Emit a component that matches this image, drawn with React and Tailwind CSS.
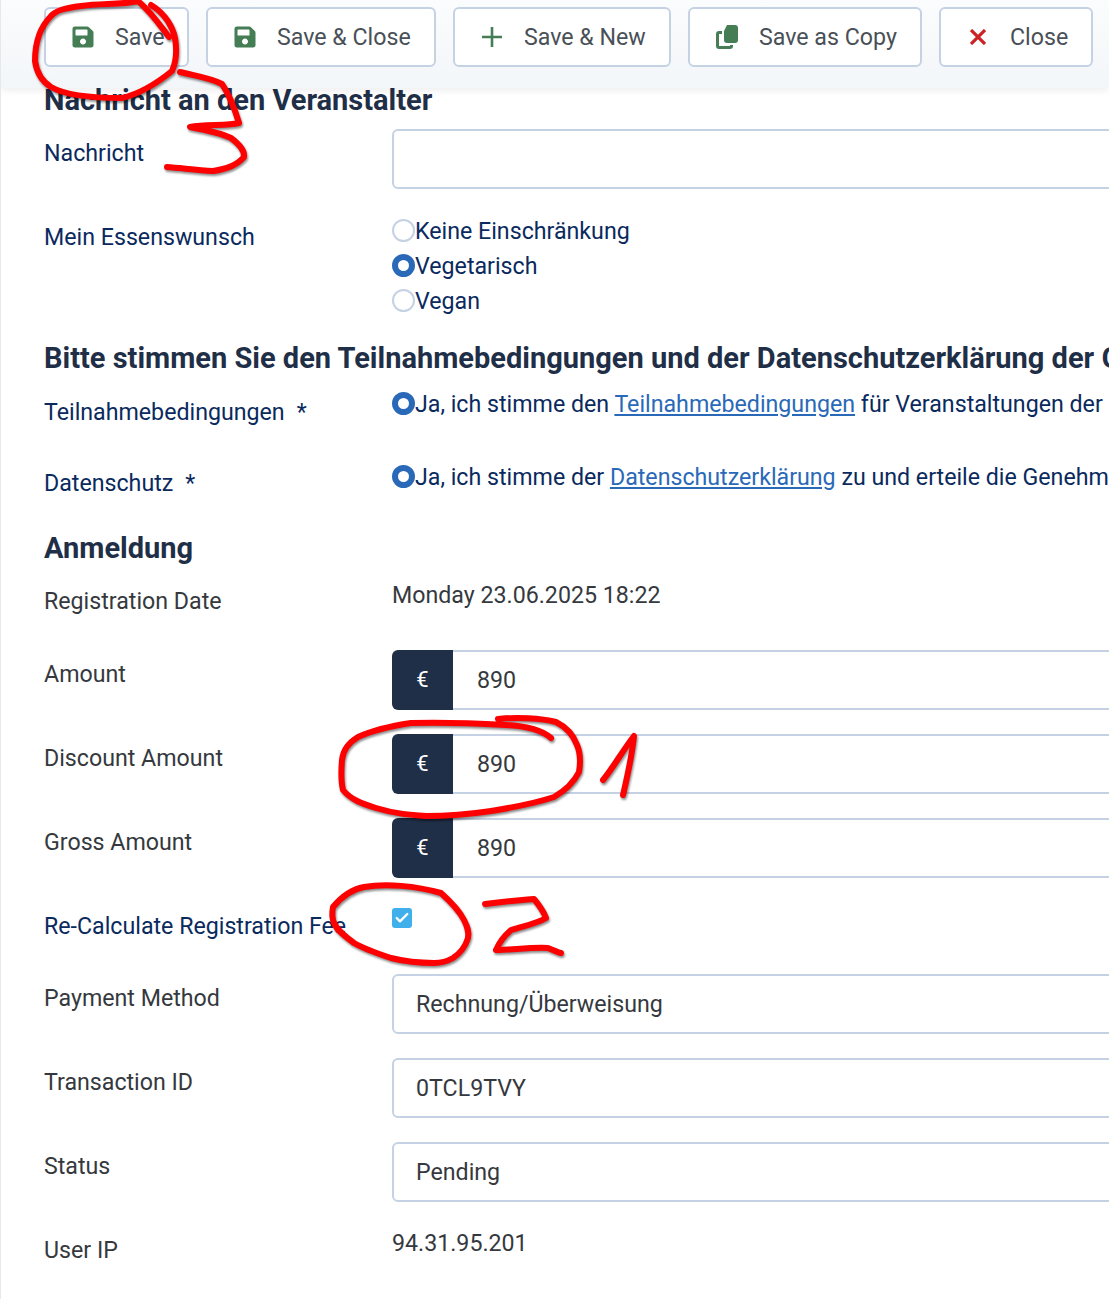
import { FaSave } from 'react-icons/fa';
import { Check } from 'lucide-react';

const ToolbarButton = ({ icon, label, className }) => (
    <button className={`h-[60px] bg-white border-2 border-[#c5d2e4] rounded-md flex items-center gap-[20px] pl-[25px] text-[#495057] ${className}`}>
        <span className="w-[24px] flex justify-center">{icon}</span>
        <span>{label}</span>
    </button>
);

const Row = ({ label, navy, required, labelTop = 'pt-[9px]', className = 'mb-[24px]', children }) => (
    <div className={`flex ${className}`}>
        <div className={`w-[348px] shrink-0 whitespace-nowrap ${labelTop} ${navy ? 'text-[#0a2a5e]' : 'text-[#35393e]'}`}>
            {label}
            {required && <span className="ml-[12px]">*</span>}
        </div>
        <div className="flex-1 min-w-0">{children}</div>
    </div>
);

const TextBox = ({ value }) => (
    <div className="h-[60px] w-[900px] border-2 border-[#c5d2e4] rounded-md px-[22px] flex items-center text-[#35393e]">{value}</div>
);

const Money = ({ value }) => (
    <div className="h-[60px] w-[900px] flex">
        <div className="w-[61px] bg-[#1f2f47] text-white rounded-l-md flex items-center justify-center text-[22px]">€</div>
        <div className="flex-1 border-y-2 border-[#c5d2e4] px-[24px] flex items-center text-[#35393e]">{value}</div>
    </div>
);

const Radio = ({ on }) => (
    <span className={`w-[23px] h-[23px] rounded-full shrink-0 bg-white ${on ? 'border-[6px] border-[#2a69b8]' : 'border-2 border-[#c5d2e4]'}`}></span>
);

const RadioLine = ({ on, children }) => (
    <div className="flex items-center h-[35px] whitespace-nowrap text-[#0a2a5e]">
        <Radio on={on} />
        <span>{children}</span>
    </div>
);

const Heading = ({ children, className }) => (
    <h2 className={`text-[29px] font-bold text-[#1f2f47] leading-[36px] whitespace-nowrap ${className}`}>{children}</h2>
);

const PlusIcon = () => (
    <svg className="w-[20px] h-[20px] text-[#457d54]" viewBox="0 0 20 20" fill="none" stroke="currentColor" strokeWidth="2.6">
        <path d="M10 0V20M0 10H20" />
    </svg>
);

const CloseIcon = () => (
    <svg className="w-[16px] h-[16px] text-[#cd2122]" viewBox="0 0 16 16" fill="none" stroke="currentColor" strokeWidth="3.2">
        <path d="M1 1L15 15M15 1L1 15" />
    </svg>
);

const CopyIcon = () => (
    <svg className="w-[22px] h-[24px] text-[#457d54]" viewBox="0 0 22 24" fill="none">
        <path d="M8 6L11 0H19Q22 0 22 3V15Q22 18 19 18H11Q8 18 8 15Z" fill="currentColor" />
        <path d="M6 7.5H3Q1.5 7.5 1.5 9V21Q1.5 22.5 3 22.5H14Q15.5 22.5 15.5 21V20" stroke="currentColor" strokeWidth="3" />
    </svg>
);

// hand drawn red marks on top of the form
const Scribbles = () => (
    <svg className="absolute left-0 top-0 w-[1109px] h-[1299px] pointer-events-none drop-shadow-[1px_2px_1px_rgba(0,0,0,0.45)]" viewBox="0 0 1109 1299" fill="none" stroke="#ff0000" strokeWidth="6" strokeLinecap="round" strokeLinejoin="round">
        <path d="M168 37C158 24 150 12 137 1C120 5 100 3 80 6C65 8 55 10 50 16C40 26 34 42 34 61C36 75 42 82 50 87C62 94 85 98 121 98C138 94 155 84 171 71C176 60 176 50 174 38C172 28 165 14 150 5" />
        <path d="M179 72C195 76 210 78 221 84C228 94 234 110 238 123C225 126 205 124 189 127C205 130 220 133 230 138C238 144 244 150 243 157C235 166 225 169 212 171C195 170 180 168 166 167" />
        <path d="M550 738C540 729 525 726 505 725C470 723 440 722 410 723C390 726 370 731 357 737C347 743 342 750 341 760C340 772 340 782 342 790C350 800 362 804 375 808C395 814 410 815 425 816C450 816 470 814 490 811C515 807 535 803 553 797C565 790 573 782 578 772C580 760 579 752 576 745C572 734 565 727 555 722C540 718 515 717 497 719" />
        <path d="M602 780C612 768 622 750 633 736C631 755 626 778 622 795" />
        <path d="M332 907C342 895 352 889 363 887C385 883 415 886 440 893C450 902 458 910 463 920C467 928 468 932 467 938C464 948 458 954 452 958C445 962 440 963 433 963C415 963 402 961 390 958C375 953 363 949 353 943C342 935 336 930 333 923C331 918 331 912 332 907Z" />
        <path d="M484 904C500 902 518 900 533 899C538 905 542 910 545 918C535 924 522 926 510 930C503 936 498 943 495 950C510 950 530 947 547 948C552 950 556 952 560 953" />
    </svg>
);

const App = () => {
    return (
        <div className="relative w-[1109px] h-[1299px] overflow-hidden bg-white border-l border-[#e6e8eb] font-['Roboto',sans-serif] text-[23.2px] leading-[30px]">
            <div className="relative h-[88px] bg-linear-to-b from-[#fbfcfd] to-[#f3f6f9] shadow-[0_2px_8px_rgba(0,0,0,0.08)] flex gap-[17px] pl-[43px] pt-[7px]">
                <ToolbarButton className="w-[145px]" label="Save" icon={<FaSave className="w-[24px] h-[24px] text-[#457d54]" />} />
                <ToolbarButton className="w-[230px]" label="Save & Close" icon={<FaSave className="w-[24px] h-[24px] text-[#457d54]" />} />
                <ToolbarButton className="w-[218px]" label="Save & New" icon={<PlusIcon />} />
                <ToolbarButton className="w-[234px]" label="Save as Copy" icon={<CopyIcon />} />
                <ToolbarButton className="w-[154px]" label="Close" icon={<CloseIcon />} />
            </div>

            <div className="pl-[43px]">
                <Heading className="-mt-[6px] mb-[11px]">Nachricht an den Veranstalter</Heading>
                <Row label="Nachricht" navy labelTop="pt-[9px]">
                    <div className="h-[60px] w-[900px] border-2 border-[#c5d2e4] rounded-md"></div>
                </Row>
                <Row label="Mein Essenswunsch" navy labelTop="pt-[9px]" className="mb-[20px]">
                    <RadioLine>Keine Einschränkung</RadioLine>
                    <RadioLine on>Vegetarisch</RadioLine>
                    <RadioLine>Vegan</RadioLine>
                </Row>
                <Heading className="mb-[10px] pt-[2px]">Bitte stimmen Sie den Teilnahmebedingungen und der Datenschutzerklärung der G</Heading>
                <Row label="Teilnahmebedingungen" navy required labelTop="pt-[11px]" className="mb-[32px]">
                    <RadioLine on>Ja, ich stimme den <a className="text-[#2a69b8] underline">Teilnahmebedingungen</a> für Veranstaltungen der</RadioLine>
                </Row>
                <Row label="Datenschutz" navy required className="mb-[32px]">
                    <RadioLine on>Ja, ich stimme der <a className="text-[#2a69b8] underline">Datenschutzerklärung</a> zu und erteile die Genehm</RadioLine>
                </Row>
                <Heading className="mb-[14px]">Anmeldung</Heading>
                <Row label="Registration Date" labelTop="pt-[6px]" className="mb-[34px]">
                    <div className="text-[#35393e]">Monday 23.06.2025 18:22</div>
                </Row>
                <Row label="Amount"><Money value="890" /></Row>
                <Row label="Discount Amount"><Money value="890" /></Row>
                <Row label="Gross Amount"><Money value="890" /></Row>
                <Row label="Re-Calculate Registration Fee" navy className="h-[72px]">
                    <div className="w-[20px] h-[20px] mt-[6px] bg-[#3fb0ec] rounded-[3px] flex items-center justify-center">
                        <Check className="w-[16px] h-[16px] text-white" strokeWidth={3.5} />
                    </div>
                </Row>
                <Row label="Payment Method"><TextBox value="Rechnung/Überweisung" /></Row>
                <Row label="Transaction ID"><TextBox value="0TCL9TVY" /></Row>
                <Row label="Status"><TextBox value="Pending" /></Row>
                <Row label="User IP">
                    <div className="pt-[2px] text-[#35393e]">94.31.95.201</div>
                </Row>
            </div>
            <Scribbles />
        </div>
    );
};

export default App;
